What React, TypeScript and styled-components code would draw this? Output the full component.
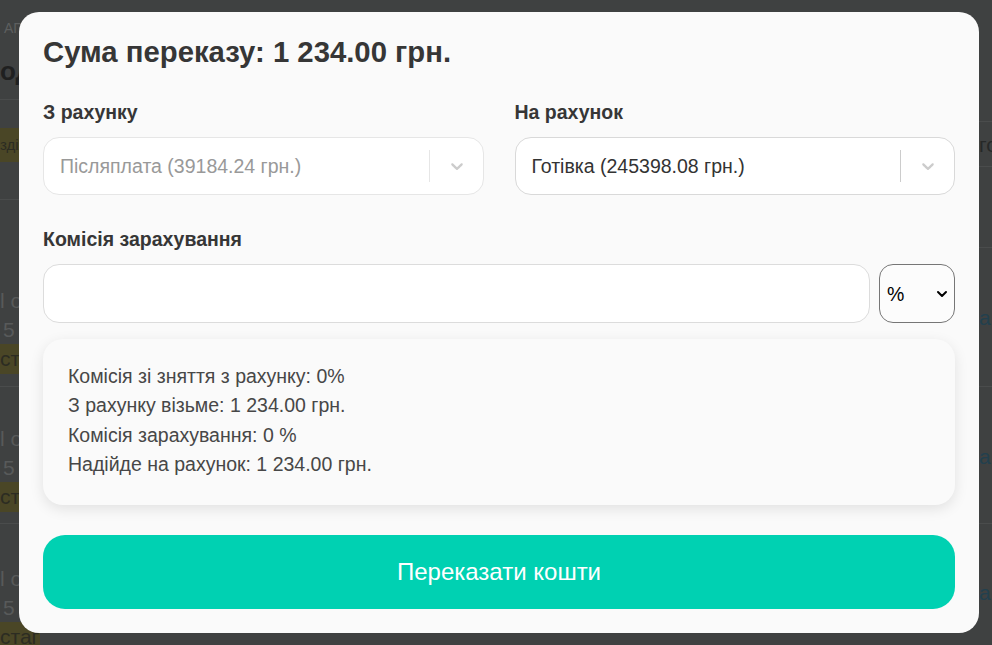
import React from 'react';
import styled, { createGlobalStyle } from 'styled-components';

const GlobalStyle = createGlobalStyle`
  html, body {
    margin: 0;
    padding: 0;
    background: #3f4141;
    font-family: "Liberation Sans", Arial, sans-serif;
  }
  * { box-sizing: border-box; }
`;

/* ---------- dimmed page behind the modal ---------- */

const Backdrop = styled.div`
  display: flex;
  width: 100%;
  height: 645px;
  overflow: hidden;
  background: #3f4141;
`;

const Strip = styled.div<{ $width: number }>`
  width: ${({ $width }) => $width}px;
  display: flex;
  flex-direction: column;
  overflow: hidden;
  white-space: nowrap;
`;

const Filler = styled.div`
  flex: 1;
`;

const Block = styled.div<{ $height: number; $line?: boolean; $top?: number }>`
  height: ${({ $height }) => $height}px;
  flex-shrink: 0;
  display: flex;
  flex-direction: column;
  padding-top: ${({ $top }) => $top ?? 0}px;
  border-bottom: ${({ $line }) => ($line ? '1px solid #4a4c4c' : 'none')};
`;

const Crumb = styled.div`
  font-size: 14px;
  line-height: 16px;
  color: #5d5f5f;
  padding-left: 4px;
`;

const PageHeading = styled.div`
  margin-top: 20px;
  font-size: 26px;
  line-height: 30px;
  font-weight: bold;
  color: #1f2020;
`;

const BgText = styled.div<{ $color?: string; $indent?: number }>`
  font-size: 21px;
  line-height: 29px;
  color: ${({ $color }) => $color ?? '#585a5a'};
  padding-left: ${({ $indent }) => $indent ?? 0}px;
`;

const BgTag = styled.div<{ $height?: number }>`
  align-self: flex-start;
  height: ${({ $height }) => $height ?? 30}px;
  line-height: ${({ $height }) => $height ?? 30}px;
  padding-right: 10px;
  font-size: 21px;
  color: #2c2c22;
  background: #4a4626;
`;

const SmallTag = styled(BgTag)`
  font-size: 15px;
`;

/* ---------- modal ---------- */

const Overlay = styled.div`
  position: fixed;
  inset: 0;
  display: flex;
  align-items: flex-start;
  padding: 12px 0 0 19px;
`;

const Modal = styled.div`
  width: 960px;
  padding: 24px;
  background: #fafafa;
  border-radius: 20px;
  color: #363636;
`;

const Title = styled.h2`
  margin: 0;
  font-size: 29.3px;
  line-height: 32px;
  font-weight: bold;
  color: #363636;
`;

const Columns = styled.div`
  display: grid;
  grid-template-columns: 1fr 1fr;
  gap: 31px;
  margin-top: 32px;
`;

const Field = styled.div`
  display: flex;
  flex-direction: column;
`;

const Label = styled.div<{ $spaced?: boolean }>`
  font-size: 19.5px;
  line-height: 24px;
  font-weight: bold;
  color: #363636;
  margin-top: ${({ $spaced }) => ($spaced ? 32 : 0)}px;
  margin-bottom: 13px;
`;

const SelectBox = styled.div<{ $disabled?: boolean }>`
  display: flex;
  align-items: center;
  height: 58px;
  background: #fff;
  border: 1px solid ${({ $disabled }) => ($disabled ? '#e6e6e6' : '#d9d9d9')};
  border-radius: 16px;
`;

const SelectValue = styled.div<{ $disabled?: boolean }>`
  flex: 1;
  padding-left: 16px;
  font-size: 19.5px;
  color: ${({ $disabled }) => ($disabled ? '#999' : '#333')};
`;

const Separator = styled.span<{ $disabled?: boolean }>`
  width: 1px;
  height: 32px;
  background: ${({ $disabled }) => ($disabled ? '#e6e6e6' : '#ccc')};
`;

const Indicator = styled.span`
  display: flex;
  padding: 0 16px 0 17px;
  color: #ccc;
`;

const CommissionRow = styled.div`
  display: flex;
  gap: 9px;
`;

const TextInput = styled.input`
  flex: 1;
  height: 59px;
  padding: 0 16px;
  font-size: 19.5px;
  font-family: inherit;
  background: #fff;
  border: 1px solid #dcdcdc;
  border-radius: 16px;
  outline: none;
`;

const UnitWrap = styled.div`
  position: relative;
  width: 76px;
  height: 59px;
`;

const UnitSelect = styled.select`
  appearance: none;
  width: 100%;
  height: 100%;
  padding: 0 0 0 7px;
  font-size: 19.5px;
  font-family: inherit;
  color: #000;
  background: #fcfcfc;
  border: 1px solid #767676;
  border-radius: 14px;
  outline: none;
`;

const UnitArrow = styled.span`
  position: absolute;
  right: 7px;
  top: 50%;
  transform: translateY(-50%);
  display: flex;
  pointer-events: none;
`;

const Summary = styled.div`
  margin-top: 16px;
  padding: 23px 25px 26px;
  background: #fafafa;
  border-radius: 20px;
  box-shadow: 0 4px 14px rgba(0, 0, 0, 0.1);
`;

const SummaryLine = styled.div`
  font-size: 19.5px;
  line-height: 29.3px;
  color: #474747;
`;

const SubmitButton = styled.button`
  display: block;
  width: 100%;
  height: 74px;
  margin-top: 30px;
  border: none;
  border-radius: 22px;
  background: #00d1b2;
  color: #fff;
  font-size: 24px;
  font-family: inherit;
  cursor: pointer;
`;

const Chevron = () => (
  <svg width="20" height="20" viewBox="0 0 20 20" fill="currentColor">
    <path d="M4.516 7.548c0.436-0.446 1.043-0.481 1.576 0l3.908 3.747 3.908-3.747c0.533-0.481 1.141-0.446 1.574 0 0.436 0.445 0.408 1.197 0 1.615-0.406 0.418-4.695 4.502-4.695 4.502-0.217 0.223-0.502 0.335-0.787 0.335s-0.57-0.112-0.789-0.335c0 0-4.287-4.084-4.695-4.502s-0.436-1.17 0-1.615z" />
  </svg>
);

const AccountSelect = ({ value, disabled }: { value: string; disabled?: boolean }) => (
  <SelectBox $disabled={disabled}>
    <SelectValue $disabled={disabled}>{value}</SelectValue>
    <Separator $disabled={disabled} />
    <Indicator>
      <Chevron />
    </Indicator>
  </SelectBox>
);

const summary = [
  'Комісія зі зняття з рахунку: 0%',
  'З рахунку візьме: 1 234.00 грн.',
  'Комісія зарахування: 0 %',
  'Надійде на рахунок: 1 234.00 грн.',
];

export default function App() {
  return (
    <>
      <GlobalStyle />
      <Backdrop>
        <Strip $width={40}>
          <Block $height={100} $top={20} $line>
            <Crumb>АГАЗИН</Crumb>
            <PageHeading>одаток</PageHeading>
          </Block>
          <Block $height={100} $top={28} $line>
            <SmallTag $height={34}>зділи</SmallTag>
          </Block>
          <Block $height={50} />
          <Block $height={137} $top={36} $line>
            <BgText>l ордер</BgText>
            <BgText $indent={3}>5</BgText>
            <BgTag>стаграм</BgTag>
          </Block>
          <Block $height={137} $top={37} $line>
            <BgText>l ордер</BgText>
            <BgText $indent={3}>5</BgText>
            <BgTag>стаграм</BgTag>
          </Block>
          <Block $height={137} $top={40}>
            <BgText>l ордер</BgText>
            <BgText $indent={3}>5</BgText>
            <BgTag>стаграм</BgTag>
          </Block>
        </Strip>
        <Filler />
        <Strip $width={13}>
          <Block $height={122} $line />
          <Block $height={45} $top={8} $line>
            <BgText $color="#262828">го</BgText>
          </Block>
          <Block $height={81} $line />
          <Block $height={139} $top={55} $line>
            <BgText $color="#22404e">а</BgText>
          </Block>
          <Block $height={137} $top={55} $line>
            <BgText $color="#22404e">а</BgText>
          </Block>
          <Block $height={121} $top={54}>
            <BgText $color="#22404e">а</BgText>
          </Block>
        </Strip>
      </Backdrop>

      <Overlay>
        <Modal>
          <Title>Сума переказу: 1 234.00 грн.</Title>
          <Columns>
            <Field>
              <Label>З рахунку</Label>
              <AccountSelect value="Післяплата (39184.24 грн.)" disabled />
            </Field>
            <Field>
              <Label>На рахунок</Label>
              <AccountSelect value="Готівка (245398.08 грн.)" />
            </Field>
          </Columns>

          <Label $spaced>Комісія зарахування</Label>
          <CommissionRow>
            <TextInput type="text" />
            <UnitWrap>
              <UnitSelect defaultValue="%">
                <option value="%">%</option>
                <option value="грн">грн</option>
              </UnitSelect>
              <UnitArrow>
                <svg width="12" height="12" viewBox="0 0 12 12" fill="none" stroke="#000" strokeWidth="2" strokeLinecap="round" strokeLinejoin="round">
                  <path d="M2 4l4 4 4-4" />
                </svg>
              </UnitArrow>
            </UnitWrap>
          </CommissionRow>

          <Summary>
            {summary.map((line) => (
              <SummaryLine key={line}>{line}</SummaryLine>
            ))}
          </Summary>

          <SubmitButton type="button">Переказати кошти</SubmitButton>
        </Modal>
      </Overlay>
    </>
  );
}
